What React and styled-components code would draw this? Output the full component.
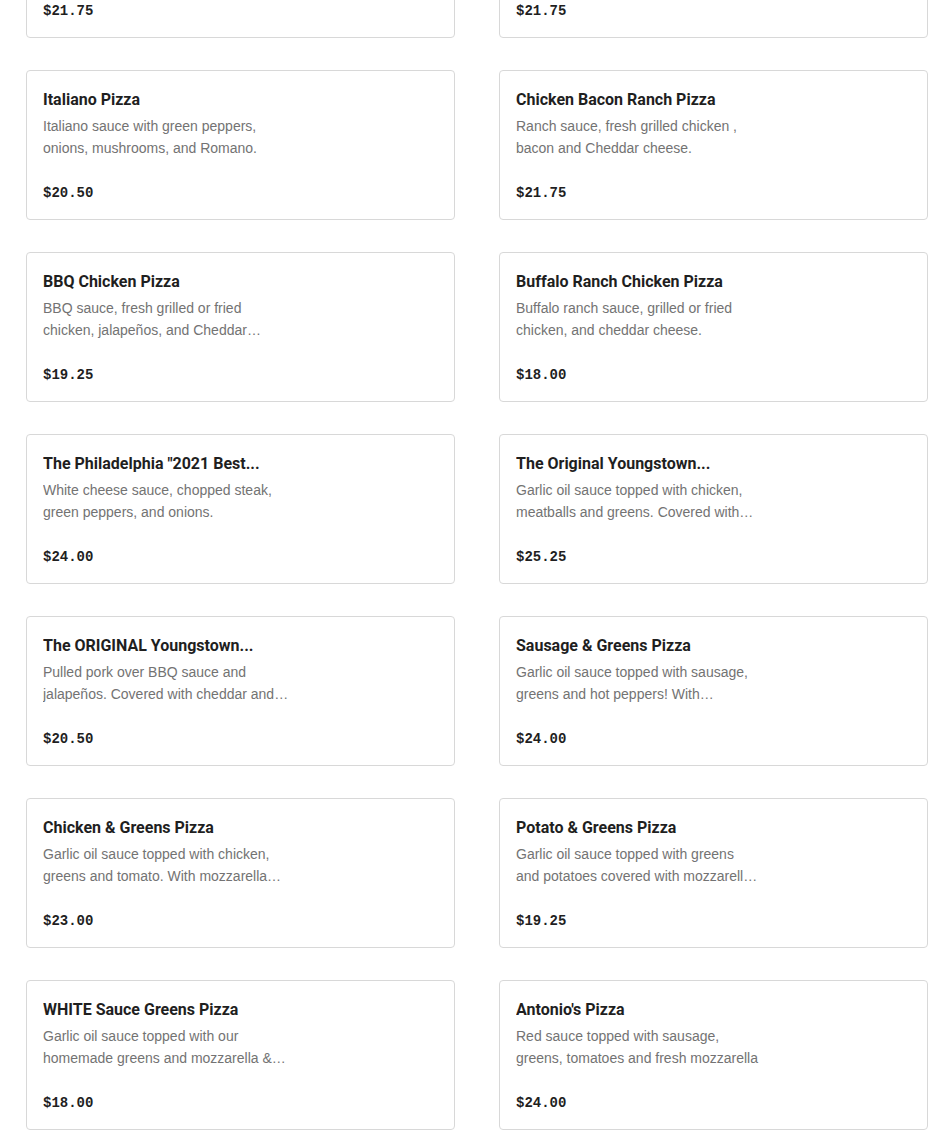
import React from "react";
import styled, { createGlobalStyle } from "styled-components";

const Global = createGlobalStyle`
  html, body { margin: 0; padding: 0; background: #ffffff; }
  body { font-family: "Liberation Sans", Arial, sans-serif; overflow: hidden; }
  * { box-sizing: border-box; }
`;

const Page = styled.div`
  padding: 0 22px 0 26px;
  margin-top: -112px;
`;

const Grid = styled.div`
  display: grid;
  grid-template-columns: 429px 429px;
  column-gap: 44px;
  row-gap: 32px;
`;

const Card = styled.div`
  display: flex;
  flex-direction: column;
  height: 150px;
  padding: 17px 16px 16px 16px;
  border: 1px solid #d8d8d8;
  border-radius: 4px;
  background: #fff;
`;

const Title = styled.div`
  width: 248px;
  font-family: Roboto, "Liberation Sans", sans-serif;
  font-size: 16px;
  font-weight: 700;
  line-height: 24px;
  color: #1f1f1f;
  white-space: nowrap;
  overflow: hidden;
  text-overflow: ellipsis;
`;

const Desc = styled.div`
  width: 248px;
  margin-top: 3px;
  font-size: 14px;
  line-height: 22px;
  color: #737373;
  white-space: pre-line;
  display: -webkit-box;
  -webkit-box-orient: vertical;
  -webkit-line-clamp: 2;
  overflow: hidden;
`;

const Price = styled.div`
  margin-top: auto;
  font-family: "Liberation Mono", "DejaVu Sans Mono", monospace;
  font-weight: 700;
  font-size: 14px;
  line-height: 20px;
  color: #1f1f1f;
`;

const items = [
  ["Pepperoni Pizza", "Red sauce, pepperoni and mozzarella cheese.", "$21.75"],
  ["Meat Lovers Pizza", "Red sauce, sausage, pepperoni, bacon and ham.", "$21.75"],
  ["Italiano Pizza", "Italiano sauce with green peppers, onions, mushrooms, and Romano.", "$20.50"],
  ["Chicken Bacon Ranch Pizza", "Ranch sauce, fresh grilled chicken , bacon and Cheddar cheese.", "$21.75"],
  ["BBQ Chicken Pizza", "BBQ sauce, fresh grilled or fried chicken, jalapeños, and Cheddar cheese.", "$19.25"],
  ["Buffalo Ranch Chicken Pizza", "Buffalo ranch sauce, grilled or fried chicken, and cheddar cheese.", "$18.00"],
  ["The Philadelphia \"2021 Best...", "White cheese sauce, chopped steak, green peppers, and onions.", "$24.00"],
  ["The Original Youngstown...", "Garlic oil sauce topped with chicken, meatballs and greens. Covered with mozzarella cheese.", "$25.25"],
  ["The ORIGINAL Youngstown...", "Pulled pork over BBQ sauce and jalapeños. Covered with cheddar and mozzarella cheese.", "$20.50"],
  ["Sausage & Greens Pizza", "Garlic oil sauce topped with sausage, greens and hot peppers! With mozzarella cheese.", "$24.00"],
  ["Chicken & Greens Pizza", "Garlic oil sauce topped with chicken, greens and tomato. With mozzarella cheese.", "$23.00"],
  ["Potato & Greens Pizza", "Garlic oil sauce topped with greens\nand potatoes covered with mozzarella cheese.", "$19.25"],
  ["WHITE Sauce Greens Pizza", "Garlic oil sauce topped with our homemade greens and mozzarella & romano.", "$18.00"],
  ["Antonio's Pizza", "Red sauce topped with sausage, greens, tomatoes and fresh mozzarella", "$24.00"],
];

export default function App() {
  return (
    <>
      <Global />
      <Page>
        <Grid>
          {items.map(([t, d, p], i) => (
            <Card key={i}>
              <Title>{t}</Title>
              <Desc>{d}</Desc>
              <Price>{p}</Price>
            </Card>
          ))}
        </Grid>
      </Page>
    </>
  );
}
